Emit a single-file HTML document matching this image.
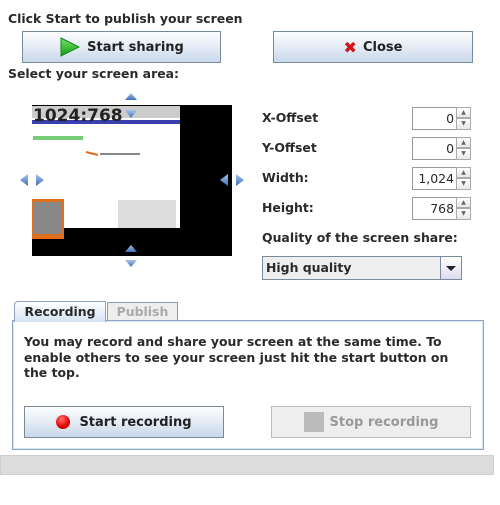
<!DOCTYPE html>
<html><head><style>
body{margin:0;width:500px;height:505px;background:#fff;position:relative;font-family:"DejaVu Sans","Liberation Sans",sans-serif;font-size:12.45px;font-weight:bold;color:#2a2a2a;overflow:hidden}
.a{position:absolute;white-space:nowrap}
.btn{position:absolute;box-sizing:border-box;border:1px solid #7a8a99;background:linear-gradient(#fdfeff,#dfe8f3 60%,#c9d8ea);display:flex;align-items:center;justify-content:center;font-size:13px;color:#222}
.sp{position:absolute;width:59px;height:23px}
.sp .f{position:absolute;left:0;top:0;width:44px;height:23px;box-sizing:border-box;border:1px solid #999;border-right:none;text-align:right;padding-right:2px;line-height:21px;background:#fff;font-weight:normal}
.sp .u,.sp .d{position:absolute;left:44px;width:15px;height:11px;box-sizing:border-box;border:1px solid #aaa;background:linear-gradient(#fff,#e4e8ec);font-size:6px;text-align:center;line-height:9px;color:#666;font-weight:normal}
.sp .u{top:0}.sp .d{top:11px;height:12px}
</style></head><body>
<div class="a" style="left:8px;top:11px">Click Start to publish your screen</div>
<div class="btn" style="left:22px;top:31px;width:199px;height:32px"><svg width="22" height="20" style="margin-right:6px"><defs><linearGradient id="g" x1="0" y1="0" x2="0" y2="1"><stop offset="0" stop-color="#7be36b"/><stop offset="1" stop-color="#0f9a14"/></linearGradient></defs><path d="M2 1 L20 10 L2 19 Z" fill="url(#g)" stroke="#118a16"/></svg>Start sharing</div>
<div class="btn" style="left:273px;top:31px;width:200px;height:32px"><span style="color:#d0141c;font-weight:bold;font-size:16px;margin-right:6px">✖</span>Close</div>
<div class="a" style="left:8px;top:66px">Select your screen area:</div>
<svg class="a" style="left:0;top:0" width="260" height="280">
<defs><linearGradient id="b" x1="0" y1="0" x2="0" y2="1"><stop offset="0" stop-color="#a9c6ec"/><stop offset="1" stop-color="#3d6fb8"/></linearGradient></defs>
<rect x="32" y="105" width="200" height="151" fill="#000"/>
<rect x="32" y="106" width="148" height="122" fill="#fff"/>
<rect x="32" y="106" width="148" height="12" fill="#ccc"/>
<rect x="32" y="120" width="148" height="4" fill="#3a3fb0"/>
<rect x="32" y="199" width="32" height="40" fill="#e07020"/>
<rect x="34" y="202" width="28" height="32" fill="#888"/>
<rect x="118" y="200" width="58" height="28" fill="#ddd"/>
<rect x="33" y="136" width="50" height="4" fill="#7c7"/>
<path d="M86 152 L98 155" stroke="#e07020" stroke-width="2"/>
<rect x="100" y="153" width="40" height="2" fill="#888"/>
<text x="33" y="121" font-family="DejaVu Sans" font-size="17" fill="#222">1024:768</text>
<path d="M125 100 L131 93 L137 100Z" fill="url(#b)"/>
<path d="M125 252 L131 245 L137 252Z" fill="url(#b)"/>
<path d="M125 260 L137 260 L131 267Z" fill="url(#b)"/>
<path d="M28 174 L20 180 L28 186Z" fill="url(#b)"/>
<path d="M36 174 L44 180 L36 186Z" fill="url(#b)"/>
<path d="M228 174 L220 180 L228 186Z" fill="url(#b)"/>
<path d="M236 174 L244 180 L236 186Z" fill="url(#b)"/>
<path d="M125 110 L137 110 L131 118Z" fill="url(#b)"/>
</svg>
<div class="a" style="left:262px;top:110px">X-Offset</div>
<div class="a" style="left:262px;top:140px">Y-Offset</div>
<div class="a" style="left:262px;top:170px">Width:</div>
<div class="a" style="left:262px;top:200px">Height:</div>
<div class="sp" style="left:412px;top:107px"><div class="f">0</div><div class="u">▲</div><div class="d">▼</div></div>
<div class="sp" style="left:412px;top:137px"><div class="f">0</div><div class="u">▲</div><div class="d">▼</div></div>
<div class="sp" style="left:412px;top:167px"><div class="f">1,024</div><div class="u">▲</div><div class="d">▼</div></div>
<div class="sp" style="left:412px;top:197px"><div class="f">768</div><div class="u">▲</div><div class="d">▼</div></div>
<div class="a" style="left:262px;top:230px">Quality of the screen share:</div>
<div class="a" style="left:262px;top:256px;width:200px;height:24px;box-sizing:border-box;border:1px solid #7a8a99;background:#eee"><span style="position:absolute;left:3px;top:3px">High quality</span><div style="position:absolute;right:0;top:0;width:20px;height:22px;border-left:1px solid #7a8a99;background:linear-gradient(#fff,#dde)"><svg width="20" height="22"><path d="M5 9 L15 9 L10 14Z" fill="#222"/></svg></div></div>
<div class="a" style="left:107px;top:302px;width:71px;height:19px;box-sizing:border-box;border:1px solid #8c9cb0;border-bottom:none;background:#eee;color:#aaa;text-align:center;line-height:17px">Publish</div>
<div class="a" style="left:12px;top:320px;width:472px;height:130px;box-sizing:border-box;border:1px solid #8ca4c4;background:#fff;box-shadow:inset 0 0 0 1px #dbe6f3"></div>
<div class="a" style="left:14px;top:301px;width:92px;height:21px;box-sizing:border-box;border:1px solid #8ca4c4;border-bottom:none;background:linear-gradient(#fff,#d4e2f3);text-align:center;line-height:20px;border-radius:4px 0 0 0">Recording</div>
<div class="a" style="left:24px;top:334px;width:445px;line-height:15.5px;white-space:normal">You may record and share your screen at the same time. To enable others to see your screen just hit the start button on the top.</div>
<div class="btn" style="left:24px;top:406px;width:200px;height:32px"><span style="display:inline-block;width:14px;height:14px;border-radius:50%;background:radial-gradient(circle at 40% 30%,#ff7070,#e00000 60%,#a00);margin-right:9px"></span>Start recording</div>
<div class="btn" style="left:271px;top:406px;width:200px;height:32px;background:#eee;border-color:#bbb;color:#999"><span style="display:inline-block;width:20px;height:20px;background:#bbb;margin-right:6px"></span>Stop recording</div>
<div class="a" style="left:0;top:455px;width:494px;height:20px;background:#dcdcdc;box-sizing:border-box;border:1px solid #cfcfcf"></div>
</body></html>
